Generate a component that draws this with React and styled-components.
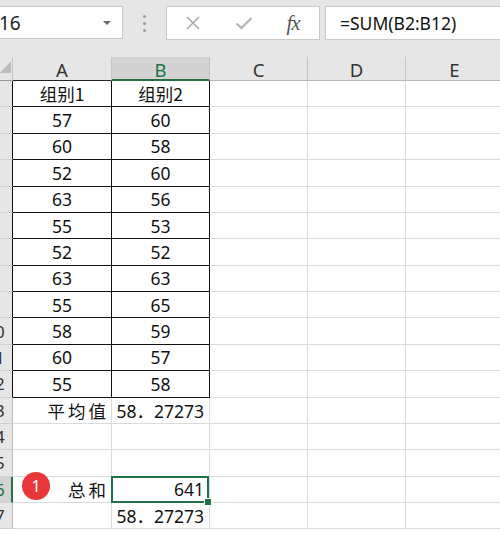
import styled, { createGlobalStyle } from "styled-components";

const GREEN = "#217346";
const SANS = `"Noto Sans", "Noto Sans CJK SC", sans-serif`;
const CJK = `"Noto Sans CJK SC", "Noto Sans", sans-serif`;

const GlobalStyle = createGlobalStyle`
  html, body {
    margin: 0;
    padding: 0;
    background: #ffffff;
    overflow: hidden;
  }
  body {
    font-family: ${SANS};
    color: #111;
  }
`;

const columns = ["A", "B", "C", "D", "E"];

const sheetRows = [
  { a: "组别1", b: "组别2", boxed: true, cjk: true },
  { a: "57", b: "60", boxed: true },
  { a: "60", b: "58", boxed: true },
  { a: "52", b: "60", boxed: true },
  { a: "63", b: "56", boxed: true },
  { a: "55", b: "53", boxed: true },
  { a: "52", b: "52", boxed: true },
  { a: "63", b: "63", boxed: true },
  { a: "55", b: "65", boxed: true },
  { a: "58", b: "59", boxed: true },
  { a: "60", b: "57", boxed: true },
  { a: "55", b: "58", boxed: true },
  { a: "平均值", b: "58．27273", right: true, cjk: true },
  {},
  {},
  { a: "总和", b: "641", right: true, cjk: true, selected: true, badge: "1" },
  { a: "", b: "58．27273", right: true },
];

const App = () => {
  return (
    <>
      <GlobalStyle />
      <Toolbar>
        <NameBox>
          <span>16</span>
          <DropArrow />
        </NameBox>
        <Grip>
          <i />
          <i />
          <i />
        </Grip>
        <FxButtons>
          <FxSlot>
            <svg width="16" height="16" viewBox="0 0 16 16">
              <path d="M2 2 L14 14 M14 2 L2 14" stroke="#a9a9a9" strokeWidth="1.6" fill="none" />
            </svg>
          </FxSlot>
          <FxSlot>
            <svg width="18" height="14" viewBox="0 0 18 14">
              <path d="M1.5 7.5 L6.5 12 L16.5 2" stroke="#b3b3b3" strokeWidth="2.2" fill="none" />
            </svg>
          </FxSlot>
          <FxSlot>
            <FxLabel>fx</FxLabel>
          </FxSlot>
        </FxButtons>
        <FormulaBox>=SUM(B2:B12)</FormulaBox>
      </Toolbar>

      <Sheet>
        <Corner>
          <svg width="13" height="24" viewBox="0 0 13 24">
            <polygon points="0,16 11,4 11,16" fill="#bcbcbc" />
          </svg>
        </Corner>
        {columns.map((c) => (
          <ColHead key={c} $active={c === "B"} $boxed={c === "A"}>
            {c}
          </ColHead>
        ))}

        {sheetRows.map((row, i) => {
          const n = i + 1;
          return [
            <RowHead key={`h${n}`} $boxed={row.boxed} $active={row.selected}>
              <RowLabel>{n}</RowLabel>
            </RowHead>,
            <Cell
              key={`a${n}`}
              $boxed={row.boxed}
              $right={row.right}
              $cjk={row.cjk}
            >
              {row.badge && <Badge>{row.badge}</Badge>}
              {row.a}
            </Cell>,
            <Cell
              key={`b${n}`}
              $boxed={row.boxed}
              $right={row.right}
              $cjk={row.cjk && !row.right}
              $selected={row.selected}
            >
              {row.b}
              {row.selected && <FillHandle />}
            </Cell>,
            <Cell key={`c${n}`} />,
            <Cell key={`d${n}`} />,
            <Cell key={`e${n}`} />,
          ];
        })}
      </Sheet>
    </>
  );
};

const Toolbar = styled.div`
  display: flex;
  align-items: flex-start;
  height: 57px;
  padding-top: 6px;
  box-sizing: border-box;
  background: #e6e6e6;
`;

const NameBox = styled.div`
  display: flex;
  align-items: center;
  width: 123px;
  height: 33px;
  box-sizing: border-box;
  background: #fff;
  border: 1px solid #c9c9c9;
  border-left: none;
  font-size: 19px;
  color: #222;
  span {
    margin-left: -1px;
  }
`;

const DropArrow = styled.i`
  margin-left: auto;
  margin-right: 11px;
  width: 0;
  height: 0;
  border-left: 4px solid transparent;
  border-right: 4px solid transparent;
  border-top: 4px solid #6b6b6b;
`;

const Grip = styled.div`
  width: 43px;
  height: 34px;
  display: flex;
  flex-direction: column;
  align-items: center;
  justify-content: center;
  gap: 4px;
  i {
    width: 3px;
    height: 3px;
    border-radius: 50%;
    background: #9c9c9c;
  }
`;

const FxButtons = styled.div`
  display: grid;
  grid-template-columns: 52px 50px 48px;
  width: 154px;
  height: 34px;
  box-sizing: border-box;
  background: #fff;
  border: 1px solid #c9c9c9;
`;

const FxSlot = styled.div`
  display: flex;
  align-items: center;
  justify-content: center;
`;

const FxLabel = styled.span`
  font-family: "Liberation Serif", serif;
  font-style: italic;
  font-size: 21px;
  color: #555;
  letter-spacing: -1px;
`;

const FormulaBox = styled.div`
  flex: 1;
  margin-left: 5px;
  height: 34px;
  box-sizing: border-box;
  display: flex;
  align-items: center;
  padding-left: 14px;
  background: #fff;
  border: 1px solid #c9c9c9;
  border-right: none;
  font-size: 17.5px;
  color: #111;
  white-space: nowrap;
`;

const Sheet = styled.div`
  display: grid;
  grid-template-columns: 13px 99px 98px 98px 98px 98px;
  grid-template-rows: 24px repeat(17, 26.375px);
  width: max-content;
`;

const Corner = styled.div`
  background: #e6e6e6;
  border-right: 1px solid #c4c4c4;
  border-bottom: 1px solid #9a9a9a;
  box-sizing: border-box;
  svg {
    display: block;
  }
`;

const ColHead = styled.div`
  display: flex;
  align-items: center;
  justify-content: center;
  box-sizing: border-box;
  background: ${(p) => (p.$active ? "#d3d3d3" : "#e6e6e6")};
  color: ${(p) => (p.$active ? GREEN : "#333")};
  border-right: 1px solid #c6c6c6;
  border-bottom: ${(p) =>
    p.$active ? `2px solid ${GREEN}` : p.$boxed ? "1px solid #222" : "1px solid #b8b8b8"};
  font-size: 18.5px;
  padding-top: 2px;
`;

const RowHead = styled.div`
  display: flex;
  align-items: center;
  overflow: hidden;
  box-sizing: border-box;
  background: ${(p) => (p.$active ? "#d3d3d3" : "#e6e6e6")};
  color: ${(p) => (p.$active ? GREEN : "#333")};
  border-right: ${(p) =>
    p.$active ? `2px solid ${GREEN}` : p.$boxed ? "1px solid #111" : "1px solid #bdbdbd"};
  border-bottom: 1px solid #d0d0d0;
  font-size: 17px;
`;

const RowLabel = styled.span`
  flex-shrink: 0;
  width: 40px;
  margin-left: -25px;
  text-align: center;
`;

const Cell = styled.div`
  position: relative;
  display: flex;
  align-items: center;
  justify-content: ${(p) => (p.$right ? "flex-end" : "center")};
  padding-right: ${(p) => (p.$right ? (p.$cjk ? "2px" : "5px") : "0")};
  box-sizing: border-box;
  background: #fff;
  border-right: 1px solid ${(p) => (p.$boxed ? "#111" : "#dadada")};
  border-bottom: 1px solid ${(p) => (p.$boxed ? "#111" : "#dadada")};
  font-family: ${(p) => (p.$cjk ? CJK : SANS)};
  font-size: 17.5px;
  letter-spacing: ${(p) => (p.$cjk && p.$right ? "3px" : "0")};
  color: #111;
  white-space: nowrap;

  ${(p) =>
    p.$selected &&
    `
    &::after {
      content: "";
      position: absolute;
      inset: -1px 0 -1px -1px;
      border: 2px solid ${GREEN};
      pointer-events: none;
    }
  `}
`;

const FillHandle = styled.i`
  position: absolute;
  right: -3px;
  bottom: -4px;
  width: 6px;
  height: 6px;
  background: ${GREEN};
  border: 1px solid #fff;
  z-index: 2;
`;

const Badge = styled.span`
  position: absolute;
  left: 9px;
  top: -5px;
  width: 28px;
  height: 28px;
  border-radius: 50%;
  background: #e8363b;
  color: #fff;
  font-family: ${SANS};
  font-size: 16px;
  letter-spacing: 0;
  display: flex;
  align-items: center;
  justify-content: center;
`;

export default App;
